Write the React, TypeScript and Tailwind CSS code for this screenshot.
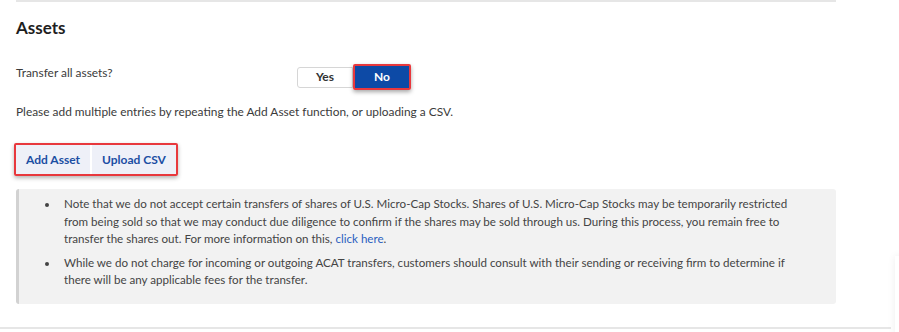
export default function App() {
  return (
    <div className="relative h-[332px] w-[899px] overflow-hidden bg-white font-['Lato',sans-serif] text-[11.9px] text-[#3b3b3b]">
      {/* top rule */}
      <div className="ml-4 mr-[63px] h-[2px] bg-[#e6e6e6]" />

      <div className="px-4">
        <h2 className="mt-[16px] text-[17px] font-bold leading-5 text-[#1e1e1e]">Assets</h2>

        {/* transfer toggle */}
        <div className="mt-[27px] flex items-start">
          <span className="w-[281px] leading-4">Transfer all assets?</span>
          <div className="mt-[-1px] flex items-center">
            <button className="h-[21px] w-[56px] rounded-l-[3px] border border-[#d6d6d6] bg-white text-[12px] font-bold text-[#333]">
              Yes
            </button>
            <div className="rounded-[2px] border-2 border-[#e8383d] shadow-[0_2px_4px_rgba(0,0,0,0.35)]">
              <button className="block h-[22px] w-[54px] bg-[#0d4aa6] text-[12px] font-bold text-white">
                No
              </button>
            </div>
          </div>
        </div>

        <p className="mt-[14px] leading-4">
          Please add multiple entries by repeating the Add Asset function, or uploading a CSV.
        </p>

        {/* asset actions */}
        <div className="mt-[23px] ml-[-2px] inline-flex rounded-[2px] border-2 border-[#e8383d] shadow-[0_2px_4px_rgba(0,0,0,0.3)]">
          <button className="h-[29px] border-r-2 border-white bg-[#eef0f8] px-[10px] text-[12px] font-bold text-[#1b4ea3]">
            Add Asset
          </button>
          <button className="h-[29px] bg-[#eef0f8] px-[10px] text-[12px] font-bold text-[#1b4ea3]">
            Upload CSV
          </button>
        </div>

        {/* notes */}
        <div className="mt-[13px] mr-[47px] h-[115px] rounded-[3px] border-l-[3px] border-[#d2d2d2] bg-[#f2f2f2] pt-[6px] pl-[40px] pr-[22px]">
          <ul className="list-disc text-[11.6px] leading-[17.5px] text-[#444]">
            <li className="pl-[5px]">
              Note that we do not accept certain transfers of shares of U.S. Micro-Cap Stocks. Shares of U.S. Micro-Cap Stocks
              may be temporarily restricted from being sold so that we may conduct due diligence to confirm if the shares may be
              sold through us. During this process, you remain free to transfer the shares out. For more information on this,{' '}
              <a className="text-[#2b5fc0]">click here</a>.
            </li>
            <li className="mt-[6px] pl-[5px]">
              While we do not charge for incoming or outgoing ACAT transfers, customers should consult with their sending or
              receiving firm to determine if there will be any applicable fees for the transfer.
            </li>
          </ul>
        </div>
      </div>

      {/* bottom rule */}
      <div className="absolute bottom-[3px] left-0 right-[8px] h-[2px] bg-[#e6e6e6]" />

      {/* edge of floating panel */}
      <div className="absolute right-[-24px] top-[256px] h-[80px] w-[28px] bg-white shadow-[0_0_8px_rgba(0,0,0,0.07)]" />
    </div>
  )
}
